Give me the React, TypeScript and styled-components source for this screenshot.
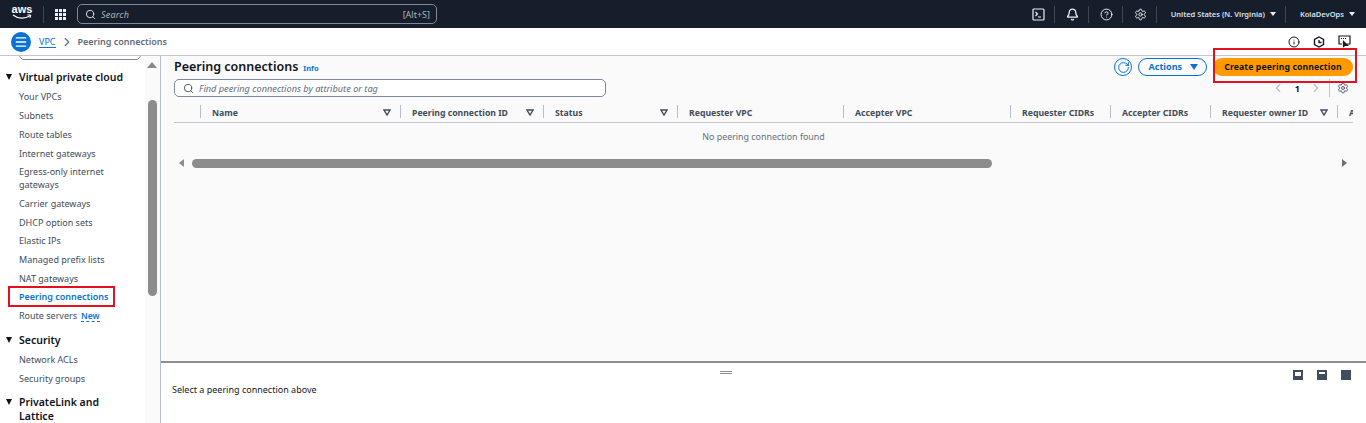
import styled, { createGlobalStyle } from 'styled-components';
import { Search, Bell, CircleHelp, Settings, ChevronRight, ChevronLeft, RotateCw, Info, Menu } from 'lucide-react';

const GlobalStyle = createGlobalStyle`
  html, body { margin: 0; height: 423px; overflow: hidden; background: #fff; }
  body { font-family: "Noto Sans", "Open Sans", sans-serif; color: #16191f; }
  * { box-sizing: border-box; }
`;

const Page = styled.div`
  display: flex;
  flex-direction: column;
  width: 1366px;
  height: 423px;
`;

const TopBar = styled.header`
  flex: 0 0 28px;
  display: flex;
  align-items: center;
  background: #161d2b;
  color: #d5dbdb;
  padding-left: 12px;
`;

const Logo = styled.div`
  width: 20px;
  display: flex;
  flex-direction: column;
  align-items: center;
  color: #fff;
  font: 700 11px/9px "Liberation Sans", sans-serif;
  margin-top: -3px;
`;

const BarDivider = styled.span`
  width: 1px;
  height: 17px;
  background: #414750;
  margin: 0 11px;
`;

const GridDots = styled.div`
  display: grid;
  grid-template-columns: repeat(3, 3px);
  gap: 1px;
  margin-right: 11px;
  span { width: 3px; height: 3px; background: #eef0f1; }
`;

const TopSearch = styled.div`
  width: 360px;
  height: 20px;
  display: flex;
  align-items: center;
  border: 1px solid #7d8998;
  border-radius: 5px;
  padding: 0 6px 0 7px;
  font-size: 9px;
  color: #aab7b8;
  em { margin-left: 5px; flex: 1; letter-spacing: .2px; }
  svg { color: #eef0f1; }
`;

const TopRight = styled.div`
  margin-left: auto;
  display: flex;
  align-items: center;
  padding-right: 2px;
  color: #eef0f1;
`;

const TopIcon = styled.div`
  width: 16px;
  margin: 0 7px 0 9px;
  display: flex;
  justify-content: center;
`;

const TopDivider = styled.span`
  width: 1px;
  height: 17px;
  background: #414750;
  margin: 0 .5px;
`;

const RegionText = styled.span`
  padding: 0 9px 0 13px;
  font-size: 7.5px;
  font-weight: 600;
  color: #d9e2ee;
  white-space: nowrap;
  &::after {
    content: "";
    display: inline-block;
    margin-left: 5px;
    border: 3px solid transparent;
    border-top: 4px solid #eef0f1;
    border-bottom: 0;
    vertical-align: 1px;
  }
`;

const BreadcrumbBar = styled.div`
  flex: 0 0 28px;
  display: flex;
  align-items: center;
  padding-left: 11px;
  background: #fff;
  border-bottom: 1px solid #c6c6cd;
  font-size: 9px;
`;

const MenuButton = styled.div`
  width: 20px;
  height: 20px;
  border-radius: 50%;
  background: #0972d3;
  color: #fff;
  display: flex;
  align-items: center;
  justify-content: center;
  margin-right: 8px;
`;

const CrumbLink = styled.span`
  color: #0972d3;
  border-bottom: 1px solid #0972d3;
  line-height: 11px;
`;

const CrumbChevron = styled.span`
  display: flex;
  margin: 0 4px;
  color: #5f6b7a;
`;

const CrumbCurrent = styled.span`
  color: #5f6b7a;
  font-weight: 600;
`;

const UtilIcons = styled.div`
  margin-left: auto;
  display: flex;
  align-items: center;
  gap: 13px;
  padding-right: 15px;
  color: #16191f;
`;

const Body = styled.div`
  flex: 1;
  display: flex;
  min-height: 0;
`;

const Sidebar = styled.nav`
  position: relative;
  flex: 0 0 161px;
  border-right: 1px solid #b6bec9;
  background: linear-gradient(to right, #fff 145px, #fafafa 145px);
  overflow: hidden;
  padding-left: 6px;
`;

const ClippedSearch = styled.div`
  width: 122px;
  height: 10px;
  margin: -6px 0 0 13px;
  border: 1px solid #7d8998;
  border-radius: 5px;
`;

const SectionTitle = styled.div<{ $top: number }>`
  display: flex;
  align-items: flex-start;
  width: 125px;
  margin-top: ${p => p.$top}px;
  font-size: 10.5px;
  font-weight: 600;
  line-height: 14px;
  color: #0f141a;
  &::before {
    content: "";
    flex: none;
    margin: 4px 7px 0 0;
    border: 3.5px solid transparent;
    border-top: 6px solid #0f141a;
    border-bottom: 0;
  }
`;

const NavGroup = styled.div`
  margin-top: 3.6px;
`;

const NavItem = styled.div<{ $active?: boolean }>`
  position: relative;
  width: 100px;
  margin-left: 13px;
  padding: 2.85px 0;
  font-size: 9px;
  line-height: 13px;
  color: ${p => (p.$active ? '#0972d3' : '#414d5c')};
  font-weight: ${p => (p.$active ? 600 : 400)};
`;

const ActiveBox = styled.span`
  position: absolute;
  left: -11px;
  right: 4px;
  top: -1px;
  bottom: -1px;
  border: 2px solid #e3101f;
`;

const NewTag = styled.span`
  margin-left: 4px;
  color: #0972d3;
  font-weight: 600;
  font-size: 8.5px;
  border-bottom: 1px dashed #0972d3;
`;

const SideScrollArrow = styled.span`
  position: absolute;
  left: 147px;
  top: 6px;
  border: 5px solid transparent;
  border-bottom: 6px solid #8a8a8a;
  border-top: 0;
`;

const SideScrollThumb = styled.span`
  position: absolute;
  left: 148px;
  top: 44px;
  width: 9px;
  height: 196px;
  border-radius: 5px;
  background: #8c8c8c;
`;

const Main = styled.main`
  flex: 1;
  display: flex;
  flex-direction: column;
  min-width: 0;
`;

const Upper = styled.section`
  flex: 0 0 307px;
  background: #fafafa;
  border-bottom: 2px solid #8c8c94;
  padding: 0 13px;
`;

const HeaderRow = styled.div`
  display: flex;
  align-items: center;
  height: 22px;
  margin-bottom: 1px;
`;

const Title = styled.h1`
  margin: -1px 0 0;
  font-size: 12.5px;
  font-weight: 600;
  color: #0f141a;
`;

const InfoLink = styled.span`
  margin: 1px 0 0 5px;
  font-size: 7.5px;
  font-weight: 700;
  color: #0972d3;
`;

const Actions = styled.div`
  margin-left: auto;
  display: flex;
  align-items: center;
`;

const RefreshButton = styled.div`
  width: 18px;
  height: 18px;
  border: 1.5px solid #0972d3;
  border-radius: 50%;
  color: #0972d3;
  display: flex;
  align-items: center;
  justify-content: center;
  margin-right: 6px;
`;

const ActionsButton = styled.div`
  width: 69px;
  height: 18px;
  border: 1.5px solid #0972d3;
  border-radius: 9px;
  color: #0972d3;
  font-size: 9px;
  font-weight: 700;
  display: flex;
  align-items: center;
  justify-content: flex-end;
  padding: 0 8px 1px 0;
  gap: 8px;
  margin-right: 6px;
  &::after {
    content: "";
    border: 4px solid transparent;
    border-top: 6px solid #0972d3;
    border-bottom: 0;
  }
`;

const PrimaryWrap = styled.div`
  position: relative;
`;

const PrimaryButton = styled.div`
  width: 140px;
  height: 18px;
  padding-bottom: 1px;
  border-radius: 9px;
  background: #ff9900;
  color: #0f141a;
  font-size: 8.7px;
  font-weight: 700;
  letter-spacing: .1px;
  display: flex;
  align-items: center;
  justify-content: center;
`;

const PrimaryHighlight = styled.span`
  position: absolute;
  left: 0;
  right: -4px;
  top: -10px;
  bottom: -7px;
  border: 2px solid #e3101f;
`;

const FilterRow = styled.div`
  display: flex;
  align-items: center;
  height: 18px;
`;

const FilterBox = styled.div`
  width: 432px;
  height: 18px;
  display: flex;
  align-items: center;
  gap: 5px;
  padding-left: 8px;
  background: #fff;
  border: 1px solid #7d8998;
  border-radius: 5px;
  color: #5f6b7a;
  font-size: 9.2px;
  font-style: italic;
  svg { color: #414d5c; }
`;

const Pager = styled.div`
  margin-left: auto;
  margin-right: 4px;
  display: flex;
  align-items: center;
  color: #b6bec9;
  font-size: 9px;
`;

const PageNumber = styled.span`
  color: #0f141a;
  font-weight: 700;
  margin: 0 9px 0 10px;
`;

const PagerDivider = styled.span`
  width: 1px;
  height: 18px;
  background: #c6c6cd;
  margin: 0 7px 0 6px;
`;

const HeadRow = styled.div`
  display: grid;
  grid-template-columns: 26px 200px 143px 134px 166px 167px 100px 100px 127px 16px;
  width: 1179px;
  height: 21px;
  margin-top: 5px;
  overflow: hidden;
  border-bottom: 1px solid #c6c6cd;
`;

const HeadCell = styled.div<{ $sep: boolean }>`
  display: flex;
  align-items: center;
  justify-content: space-between;
  padding: 1px 9px 0 12px;
  font-size: 8.7px;
  font-weight: 700;
  color: #414d5c;
  white-space: nowrap;
  position: relative;
  &::before {
    content: "";
    display: ${p => (p.$sep ? 'block' : 'none')};
    position: absolute;
    left: 0;
    top: 3px;
    bottom: 4px;
    width: 1px;
    background: #b6bec9;
  }
`;

const SortCaret = styled.svg`
  flex: none;
`;

const EmptyRow = styled.div`
  width: 1179px;
  text-align: center;
  font-size: 8.9px;
  color: #687078;
  line-height: 12px;
  margin-top: 8px;
`;

const HScroll = styled.div`
  display: flex;
  align-items: center;
  width: 1179px;
  height: 10px;
  margin-top: 15px;
`;

const ArrowLeft = styled.span`
  border: 4px solid transparent;
  border-right: 5px solid #8c8c8c;
  border-left: 0;
  margin-left: 5px;
`;

const HThumb = styled.span`
  width: 800px;
  height: 9px;
  border-radius: 5px;
  background: #8c8c8c;
  margin-left: 8px;
`;

const ArrowRight = styled.span`
  margin: 0 6px 0 auto;
  border: 4px solid transparent;
  border-left: 5px solid #6f6f6f;
  border-right: 0;
`;

const Lower = styled.section`
  position: relative;
  flex: 1;
  background: #fff;
  padding: 20px 0 0 11px;
  font-size: 9px;
  color: #16191f;
`;

const Grip = styled.span`
  position: absolute;
  left: 559px;
  top: 8px;
  width: 12px;
  height: 3px;
  border-top: 1px solid #8c8c94;
  border-bottom: 1px solid #8c8c94;
`;

const SplitIcons = styled.div`
  position: absolute;
  right: 15px;
  top: 7px;
  display: flex;
  gap: 14px;
`;

const SplitIcon = styled.span<{ $fill: number }>`
  position: relative;
  width: 10px;
  height: 10px;
  border: 2px solid #414d5c;
  background: #fff;
  &::after {
    content: "";
    position: absolute;
    left: 0;
    right: 0;
    bottom: 0;
    height: ${p => p.$fill}%;
    background: #414d5c;
  }
`;

const Caret = () => (
  <SortCaret width="8" height="7" viewBox="0 0 8 7">
    <path d="M1 1h6L4 6z" fill="none" stroke="#414d5c" strokeWidth="1.4" />
  </SortCaret>
);

const columns: { name?: string; sort?: boolean }[] = [
  {},
  { name: 'Name', sort: true },
  { name: 'Peering connection ID', sort: true },
  { name: 'Status', sort: true },
  { name: 'Requester VPC' },
  { name: 'Accepter VPC' },
  { name: 'Requester CIDRs' },
  { name: 'Accepter CIDRs' },
  { name: 'Requester owner ID', sort: true },
  { name: 'A' },
];

const vpcItems = [
  'Your VPCs', 'Subnets', 'Route tables', 'Internet gateways', 'Egress-only internet gateways',
  'Carrier gateways', 'DHCP option sets', 'Elastic IPs', 'Managed prefix lists', 'NAT gateways',
];

const TerminalIcon = () => (
  <svg width="13" height="13" viewBox="0 0 13 13" fill="none" stroke="currentColor" strokeWidth="1.2">
    <rect x="1" y="1" width="11" height="11" rx="1" />
    <path d="M3.5 4l2 2-2 2M6 9h3" />
  </svg>
);

const ShieldIcon = () => (
  <svg width="12" height="12" viewBox="0 0 12 12" fill="none" stroke="currentColor" strokeWidth="1.4">
    <path d="M6 1l4.500 2.500v5L6 11 1.500 8.500v-5z" />
    <path d="M6 4v2.500h2.500" />
  </svg>
);

const FeedbackIcon = () => (
  <svg width="13" height="13" viewBox="0 0 13 13" fill="none" stroke="currentColor" strokeWidth="1.2">
    <path d="M4 9H1V1h11v8H9" />
    <path d="M3 3.500h1M5 3.500h1M7 3.500h1" />
    <path d="M5.500 6.500v5l1.500-1.200h2.500z" fill="currentColor" />
  </svg>
);

export default function App() {
  return (
    <Page>
      <GlobalStyle />
      <TopBar>
        <Logo>
          aws
          <svg width="20" height="6" viewBox="0 0 20 6" fill="none">
            <path d="M1 1c5 4 12 4 17 .8" stroke="#fff" strokeWidth="1.2" />
            <path d="M15.500 1h3.300l-.8 3" stroke="#fff" strokeWidth="1" />
          </svg>
        </Logo>
        <BarDivider />
        <GridDots>
          {Array.from({ length: 9 }).map((_, i) => <span key={i} />)}
        </GridDots>
        <TopSearch>
          <Search size={11} strokeWidth={2} />
          <em>Search</em>
          <span>[Alt+S]</span>
        </TopSearch>
        <TopRight>
          <TopIcon><TerminalIcon /></TopIcon>
          <TopDivider />
          <TopIcon><Bell size={13} strokeWidth={2.4} /></TopIcon>
          <TopDivider />
          <TopIcon><CircleHelp size={13} strokeWidth={1.8} /></TopIcon>
          <TopDivider />
          <TopIcon><Settings size={13} strokeWidth={1.8} /></TopIcon>
          <TopDivider />
          <RegionText>United States (N. Virginia)</RegionText>
          <TopDivider />
          <RegionText>KolaDevOps</RegionText>
        </TopRight>
      </TopBar>

      <BreadcrumbBar>
        <MenuButton><Menu size={14} strokeWidth={2.4} /></MenuButton>
        <CrumbLink>VPC</CrumbLink>
        <CrumbChevron><ChevronRight size={14} /></CrumbChevron>
        <CrumbCurrent>Peering connections</CrumbCurrent>
        <UtilIcons>
          <Info size={12} strokeWidth={2} />
          <ShieldIcon />
          <FeedbackIcon />
        </UtilIcons>
      </BreadcrumbBar>

      <Body>
        <Sidebar>
          <ClippedSearch />
          <SectionTitle $top={10}>Virtual private cloud</SectionTitle>
          <NavGroup>
            {vpcItems.map(item => <NavItem key={item}>{item}</NavItem>)}
            <NavItem $active>Peering connections<ActiveBox /></NavItem>
            <NavItem>Route servers<NewTag>New</NewTag></NavItem>
          </NavGroup>
          <SectionTitle $top={8}>Security</SectionTitle>
          <NavGroup>
            <NavItem>Network ACLs</NavItem>
            <NavItem>Security groups</NavItem>
          </NavGroup>
          <SectionTitle $top={7.6}>PrivateLink and Lattice</SectionTitle>
          <SideScrollArrow />
          <SideScrollThumb />
        </Sidebar>

        <Main>
          <Upper>
            <HeaderRow>
              <Title>Peering connections</Title>
              <InfoLink>Info</InfoLink>
              <Actions>
                <RefreshButton><RotateCw size={13} strokeWidth={1.8} /></RefreshButton>
                <ActionsButton>Actions</ActionsButton>
                <PrimaryWrap>
                  <PrimaryButton>Create peering connection</PrimaryButton>
                  <PrimaryHighlight />
                </PrimaryWrap>
              </Actions>
            </HeaderRow>
            <FilterRow>
              <FilterBox>
                <Search size={11} strokeWidth={2} />
                Find peering connections by attribute or tag
              </FilterBox>
              <Pager>
                <ChevronLeft size={14} />
                <PageNumber>1</PageNumber>
                <ChevronRight size={14} />
                <PagerDivider />
                <Settings size={12} color="#414d5c" strokeWidth={1.8} />
              </Pager>
            </FilterRow>
            <HeadRow>
              {columns.map((col, i) => (
                <HeadCell key={i} $sep={i > 0}>
                  {col.name}
                  {col.sort && <Caret />}
                </HeadCell>
              ))}
            </HeadRow>
            <EmptyRow>No peering connection found</EmptyRow>
            <HScroll>
              <ArrowLeft />
              <HThumb />
              <ArrowRight />
            </HScroll>
          </Upper>
          <Lower>
            <Grip />
            <SplitIcons>
              <SplitIcon $fill={30} />
              <SplitIcon $fill={60} />
              <SplitIcon $fill={100} />
            </SplitIcons>
            Select a peering connection above
          </Lower>
        </Main>
      </Body>
    </Page>
  );
}
